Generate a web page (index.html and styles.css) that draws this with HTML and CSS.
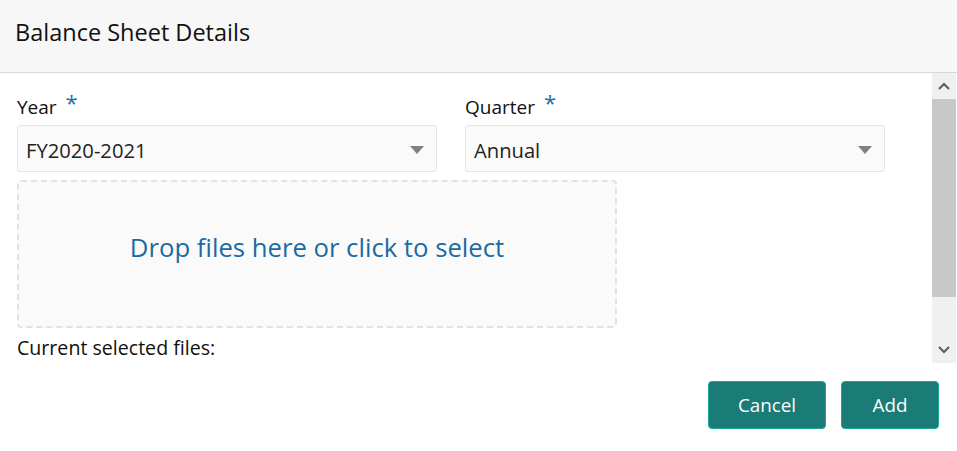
FILE: index.html
```html
<!DOCTYPE html>
<html>
<head>
<meta charset="utf-8">
<link rel="stylesheet" href="styles.css">
</head>
<body>
<div class="dialog">
  <header class="dlg-header">
    <h1 class="dlg-title">Balance Sheet Details</h1>
  </header>
  <div class="dlg-body">
    <div class="content">
      <div class="fields">
        <div class="field">
          <label class="field-label">Year <span class="req">*</span></label>
          <div class="select">
            <span class="select-value">FY2020-2021</span>
            <span class="caret"></span>
          </div>
        </div>
        <div class="field">
          <label class="field-label">Quarter <span class="req">*</span></label>
          <div class="select">
            <span class="select-value">Annual</span>
            <span class="caret"></span>
          </div>
        </div>
      </div>
      <div class="dropzone">Drop files here or click to select</div>
      <div class="current">Current selected files:</div>
    </div>
    <div class="scrollbar">
      <div class="sb-btn">
        <svg width="12" height="8" viewBox="0 0 12 8"><path d="M1 7 L6 2 L11 7" fill="none" stroke="#606060" stroke-width="2.2"/></svg>
      </div>
      <div class="sb-track">
        <div class="sb-thumb"></div>
      </div>
      <div class="sb-btn">
        <svg width="12" height="8" viewBox="0 0 12 8"><path d="M1 1 L6 6 L11 1" fill="none" stroke="#606060" stroke-width="2.2"/></svg>
      </div>
    </div>
  </div>
  <footer class="dlg-footer">
    <button class="btn">Cancel</button>
    <button class="btn btn-add">Add</button>
  </footer>
</div>
</body>
</html>
```

FILE: styles.css
```css
* { box-sizing: border-box; }
html, body { margin: 0; padding: 0; background: #fff; }
body {
  font-family: "Open Sans", "Noto Sans", sans-serif;
  color: #111;
  width: 957px;
  height: 451px;
  overflow: hidden;
}
.dialog { display: flex; flex-direction: column; height: 451px; }
.dlg-header {
  height: 73px;
  background: #f7f7f7;
  border-bottom: 1px solid #d8d8d8;
  display: flex;
  align-items: center;
  padding-left: 15px;
}
.dlg-title {
  margin: 0;
  font-size: 23.5px;
  font-weight: 400;
  color: #111;
  position: relative;
  top: -4px;
}
.dlg-body {
  display: flex;
  height: 290px;
}
.content {
  flex: 1;
  padding: 19px 0 0 17px;
}
.fields { display: flex; gap: 28px; }
.field { width: 420px; }
.field-label {
  display: block;
  font-size: 19px;
  line-height: 26px;
  height: 33px;
  color: #111;
}
.req {
  color: #1f6ea8;
  font-size: 22px;
  margin-left: 4px;
  position: relative;
  top: -3px;
}
.select {
  height: 47px;
  border: 1px solid #e5e5e5;
  border-radius: 3px;
  background: #fafafa;
  display: flex;
  align-items: center;
  justify-content: space-between;
  padding: 2px 12px 0 8px;
}
.select-value { font-size: 20.2px; color: #222; }
.caret {
  width: 0; height: 0;
  border-left: 7px solid transparent;
  border-right: 7px solid transparent;
  border-top: 8px solid #808080;
}
.dropzone {
  margin-top: 8px;
  width: 600px;
  height: 148px;
  border: 2px dashed #e2e2e2;
  border-radius: 4px;
  background: #fafafa;
  display: flex;
  align-items: center;
  justify-content: center;
  color: #1a6aa3;
  font-size: 25.7px;
  padding-bottom: 14px;
}
.current {
  font-size: 19.6px;
  line-height: 24px;
  margin-top: 8px;
  color: #111;
}
.scrollbar {
  width: 24px;
  margin-right: 1px;
  background: #f0f0f0;
  display: flex;
  flex-direction: column;
}
.sb-btn {
  height: 26px;
  display: flex;
  align-items: center;
  justify-content: center;
}
.sb-track { flex: 1; }
.sb-thumb { height: 198px; background: #c8c8c8; }
.dlg-footer {
  flex: 1;
  display: flex;
  justify-content: flex-end;
  align-items: flex-start;
  gap: 15px;
  padding: 18px 18px 0 0;
}
.btn {
  height: 48px;
  width: 118px;
  background: #1b7b76;
  border: 1px solid #1aa49a;
  border-radius: 4px;
  color: #fff;
  font-family: "Open Sans", "Noto Sans", sans-serif;
  font-size: 18.8px;
  padding: 0;
}
.btn-add { width: 98px; }
```
